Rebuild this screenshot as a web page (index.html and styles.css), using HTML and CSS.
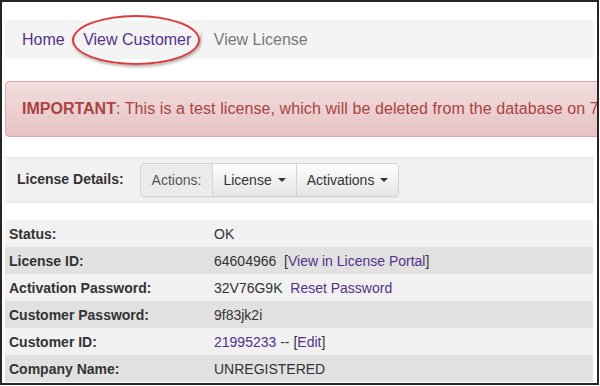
FILE: index.html
```html
<!DOCTYPE html>
<html lang="en">
  <head>
    <meta charset="UTF-8" />
    <title>View License</title>
    <link rel="stylesheet" href="styles.css">
  </head>
  <body>
    <div class="frame">
      <ol class="breadcrumb">
        <li><a href="#">Home</a></li>
        <li class="sep">/</li>
        <li><a href="#">View Customer</a></li>
        <li class="sep">/</li>
        <li class="active">View License</li>
      </ol>
      <span class="callout"></span>

      <div class="alert"><b>IMPORTANT</b>: This is a test license, which will be deleted from the database on 7/31/2017.</div>

      <div class="toolbar">
        <span class="toolbar-title">License Details:</span>
        <div class="btn-group">
          <span class="btn btn-label">Actions:</span>
          <span class="btn">License<i class="caret"></i></span>
          <span class="btn">Activations<i class="caret"></i></span>
        </div>
      </div>

      <table class="details">
        <tr><th>Status:</th><td>OK</td></tr>
        <tr><th>License ID:</th><td>64604966&nbsp; [<a href="#">View in License Portal</a>]</td></tr>
        <tr><th>Activation Password:</th><td>32V76G9K&nbsp; <a href="#">Reset Password</a></td></tr>
        <tr><th>Customer Password:</th><td>9f83jk2i</td></tr>
        <tr><th>Customer ID:</th><td><a href="#">21995233</a> -- [<a href="#">Edit</a>]</td></tr>
        <tr><th>Company Name:</th><td>UNREGISTERED</td></tr>
      </table>
    </div>
  </body>
</html>
```

FILE: styles.css
```css
body {
  margin: 0;
  font-family: "Liberation Sans", Arial, sans-serif;
  color: #333;
  background: #fff;
}
a {
  color: #53328a;
  text-decoration: none;
}
.frame {
  position: relative;
  width: 599px;
  height: 385px;
  box-sizing: border-box;
  border: 2px solid #262626;
  padding: 18px 3px 0 3px;
  overflow: hidden;
}

/* хлебные крошки */
.breadcrumb {
  display: flex;
  align-items: center;
  margin: 0;
  padding: 0 15px 0 17px;
  height: 39px;
  list-style: none;
  background: #f4f4f4;
  border-radius: 4px;
  font-size: 16px;
}
.breadcrumb .sep {
  color: #ccc;
  padding: 0 7px;
}
.breadcrumb .active {
  color: #777;
  margin-left: 4px;
}
/* красный овал поверх ссылки */
.callout {
  position: absolute;
  left: 70px;
  top: 13px;
  width: 124px;
  height: 46px;
  border: 2px solid #dc3b3b;
  border-radius: 50%;
  box-shadow: 1px 2px 3px rgba(0, 0, 0, 0.3);
}

/* предупреждение */
.alert {
  margin-top: 22px;
  width: 640px;
  box-sizing: border-box;
  padding: 17px 16px;
  line-height: 20px;
  white-space: nowrap;
  font-size: 16px;
  letter-spacing: 0.08px;
  color: #a94442;
  background: linear-gradient(#f2dede, #e7c3c3);
  border: 1px solid #dca7a7;
  border-radius: 4px;
}
.alert b {
  letter-spacing: 0;
}

/* панель действий */
.toolbar {
  margin-top: 20px;
  height: 46px;
  box-sizing: border-box;
  display: flex;
  align-items: center;
  padding-left: 12px;
  background: #f1f1f1;
  border-top: 1px solid #e2e2e2;
  border-bottom: 1px solid #e6e6e6;
}
.toolbar-title {
  font-weight: bold;
  font-size: 14px;
  margin-right: 16px;
  margin-top: -2px;
}
.btn-group {
  display: flex;
  border: 1px solid #d4d4d4;
  border-radius: 4px;
  box-shadow: 0 1px 1px rgba(0, 0, 0, 0.06);
}
.btn {
  display: flex;
  align-items: center;
  height: 32px;
  padding: 0 10px;
  font-size: 14px;
  color: #333;
  background: linear-gradient(#fff, #e4e4e4);
  border-left: 1px solid #d4d4d4;
}
.btn:first-child {
  border-left: none;
  border-radius: 4px 0 0 4px;
  padding: 0 11px;
}
.btn:last-child {
  border-radius: 0 4px 4px 0;
}
.btn-label {
  background: #ebebeb;
  color: #555;
}
.caret {
  display: inline-block;
  margin-left: 6px;
  border-top: 4px solid #333;
  border-left: 4px solid transparent;
  border-right: 4px solid transparent;
}

/* таблица */
.details {
  margin-top: 17px;
  width: 588px;
  border-collapse: collapse;
  font-size: 14px;
}
.details th,
.details td {
  height: 27px;
  padding: 0 4px;
  text-align: left;
}
.details th {
  width: 197px;
}
.details tr:nth-child(odd) {
  background: #f1f1f1;
}
.details tr:nth-child(even) {
  background: #e1e1e1;
}
```
